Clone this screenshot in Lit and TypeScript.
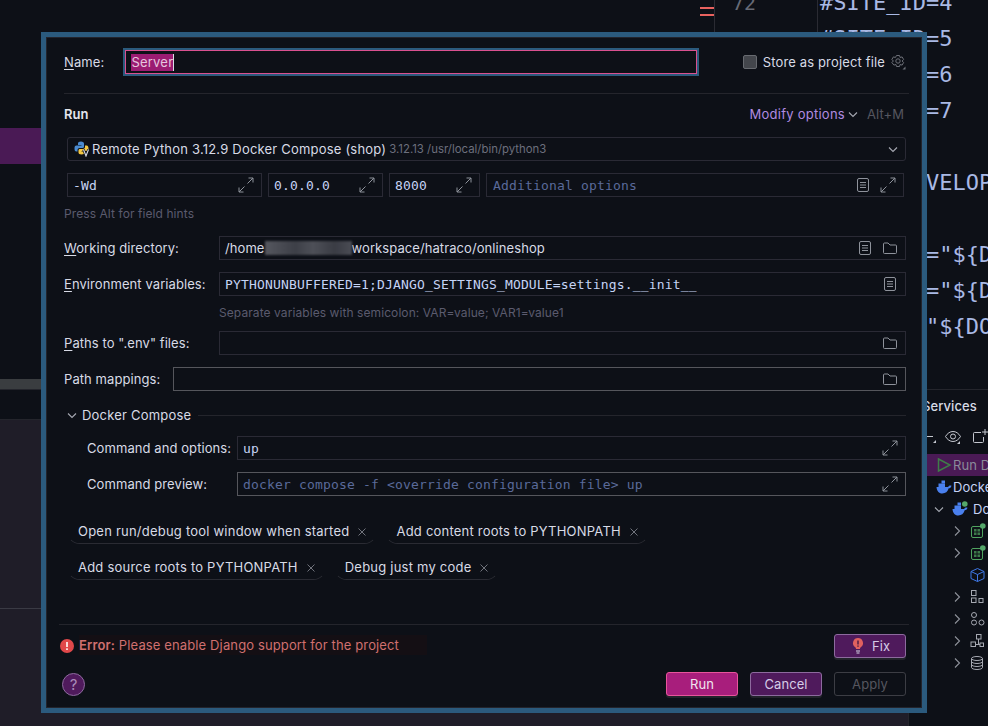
import {css, html, LitElement, svg} from 'lit';
import {customElement} from 'lit/decorators.js';

const expand = html`<svg class="ic" viewBox="0 0 16 16" fill="none" stroke="#8e929b" stroke-width="1"><path d="M9.5 6.5 15 1M10.5 1H15V5.5M6.5 9.5 1 15M1 10.5V15H5.5"/></svg>`;
const docIcon = html`<svg class="ic" viewBox="0 0 16 16" fill="none" stroke="#8e929b" stroke-width="1"><rect x="2.5" y="1.5" width="11" height="13" rx="1.5"/><path d="M5 5.500h6M5 8h6M5 10.500h6"/></svg>`;
const folder = html`<svg class="ic" viewBox="0 0 16 16" fill="none" stroke="#8e929b" stroke-width="1"><path d="M1.500 4a1 1 0 0 1 1-1H6l2 2h5.500a1 1 0 0 1 1 1v6.500a1 1 0 0 1-1 1h-11a1 1 0 0 1-1-1z"/></svg>`;
const chevDown = html`<svg class="ic" viewBox="0 0 16 16" fill="none" stroke="#a6a9b2" stroke-width="1.100"><path d="M4 6.500 8 10.500 12 6.500"/></svg>`;
const chevRight = html`<svg class="ic" viewBox="0 0 16 16" fill="none" stroke="#8e929b" stroke-width="1.100"><path d="M6 3.500 10.500 8 6 12.500"/></svg>`;
const cross = html`<svg class="x" viewBox="0 0 10 10" fill="none" stroke="#70737c" stroke-width="1"><path d="M1.500 1.500 8.500 8.500M8.500 1.500 1.500 8.500"/></svg>`;

const whale = (dot = false) => html`<svg class="ic" viewBox="0 0 16 16">
    <path fill="#4a80ee" d="M.5 8h11.700c.5-1.200 1.800-1.700 3.300-1.300-.4 1.700-1.500 2.500-2.800 2.600C11.700 12.700 9.500 14.500 6.300 14.500 2.800 14.500.8 12 .5 8z"/>
    <rect x="2.500" y="4.500" width="6.500" height="3.500" fill="#4a80ee"/>
    <rect x="5.500" y="1.500" width="3.500" height="3" fill="#4a80ee"/>
    ${dot ? svg`<circle cx="12.800" cy="3" r="2.800" fill="#55a76a"/>` : ''}
</svg>`;
const grid = html`<svg class="ic" viewBox="0 0 16 16" fill="none">
    <rect x="1.500" y="3.500" width="11" height="11" rx="1.500" stroke="#4fa35f"/>
    <path d="M4 6h6v6H4z" fill="#3c7a49"/><path d="M7 6v6M4 9h6" stroke="#12161c"/>
    <circle cx="12.800" cy="3" r="2.800" fill="#55a76a"/>
</svg>`;
const cube = html`<svg class="ic" viewBox="0 0 16 16" fill="none" stroke="#3f78e6"><path d="M7.500 1.500 14 4.500V11.500L7.500 14.500 1 11.500V4.500zM1 4.500 7.500 7.500 14 4.500M7.500 7.500V14.500"/></svg>`;
const stack = html`<svg class="ic" viewBox="0 0 16 16" fill="none" stroke="#a6a9b2"><rect x="1.500" y="1.500" width="4.500" height="5"/><rect x="1.500" y="9" width="4.500" height="4.500"/><rect x="9" y="9.500" width="4" height="4"/></svg>`;
const nodes = html`<svg class="ic" viewBox="0 0 16 16" fill="none" stroke="#a6a9b2"><circle cx="4" cy="4" r="2.500"/><circle cx="4" cy="11.500" r="2.500"/><circle cx="11.500" cy="11.500" r="2.500"/></svg>`;
const network = html`<svg class="ic" viewBox="0 0 16 16" fill="none" stroke="#a6a9b2"><rect x="6.500" y="1.500" width="4.500" height="4.500"/><rect x="1" y="9" width="4.500" height="4.500"/><rect x="10" y="10" width="3.500" height="3.500"/><path d="M8.500 6v5.500M5.500 11.500H10"/></svg>`;
const db = html`<svg class="ic" viewBox="0 0 16 16" fill="none" stroke="#a6a9b2"><ellipse cx="7" cy="3.500" rx="5.500" ry="2"/><path d="M1.500 3.500v9c0 1.100 2.500 2 5.500 2s5.500-.9 5.500-2v-9M1.500 6.500c0 1.100 2.500 2 5.500 2s5.500-.9 5.500-2M1.500 9.500c0 1.100 2.500 2 5.500 2s5.500-.9 5.500-2"/></svg>`;

const codeLines = ['#SITE_ID=4', '#SITE_ID=5', '#SITE_ID=6', '#SITE_ID=7', '', '#     DEVELOP', '', 'DATABASE="${DB_NAME}"', 'USERNAME="${DB_USER}"', 'DB_PASS="${DOCKER}"'];

const services = [
    {indent: 27, chevron: null, icon: html`<svg class="ic" viewBox="0 0 16 16" fill="none" stroke="#3f7d48" stroke-width="1.500"><path d="M2.500 2 14 8 2.500 14z"/></svg>`, text: 'Run D', run: true},
    {indent: 27, chevron: null, icon: whale(), text: 'Docke'},
    {indent: 22, chevron: chevDown, icon: whale(true), text: 'Do', nested: true},
    {indent: 40, chevron: chevRight, icon: grid},
    {indent: 40, chevron: chevRight, icon: grid},
    {indent: 61, chevron: null, icon: cube},
    {indent: 40, chevron: chevRight, icon: stack},
    {indent: 40, chevron: chevRight, icon: nodes},
    {indent: 40, chevron: chevRight, icon: network},
    {indent: 40, chevron: chevRight, icon: db},
];

@customElement("app-root")
export class AppRoot extends LitElement {

    static styles = css`
        :host {
            display: block;
            position: relative;
            width: 988px;
            height: 726px;
            overflow: hidden;
            background: #0d1017;
            font-family: Inter, "Liberation Sans", sans-serif;
            font-size: 13px;
            letter-spacing: .08px;
            color: #d8dbe6;
        }

        .ic {
            width: 16px;
            height: 16px;
            flex: none;
            display: block;
        }

        /* ide behind the dialog */
        .ide {
            display: grid;
            grid-template-columns: 909px 79px;
            grid-template-rows: 390px 336px;
            height: 726px;
        }

        .editor {
            grid-column: 1 / 3;
            display: flex;
            overflow: hidden;
            border-bottom: 1px solid #24252c;
            box-sizing: border-box;
        }

        .projectPane {
            width: 700px;
            flex: none;
            display: flex;
            flex-direction: column;
        }

        .selected {
            height: 36px;
            margin-top: 128px;
            background: #4a1a55;
        }

        .hscroll {
            height: 10px;
            margin-top: auto;
            background: #3a3d40;
        }

        .marker {
            width: 14px;
            height: 9px;
            flex: none;
            margin-top: 7px;
            box-sizing: border-box;
            border-top: 2px solid #e8625f;
            border-bottom: 2px solid #e8625f;
        }

        .gutter {
            width: 104px;
            flex: none;
            border-left: 1px solid #2a2b33;
            border-right: 1px solid #2a2b33;
            padding-left: 17px;
            box-sizing: border-box;
            font: 20px/36px "DejaVu Sans Mono", monospace;
            color: #666a76;
        }

        .gutter div, .code div {
            height: 36px;
            position: relative;
            top: -15px;
        }

        .code {
            flex: none;
            padding-left: 2px;
            font: 22px/36px "DejaVu Sans Mono", monospace;
            letter-spacing: 0;
            color: #a9b9e5;
            white-space: pre;
        }

        .bottomLeft {
            display: flex;
            flex-direction: column;
        }

        .bottomLeft .gap {
            height: 29px;
        }

        .bottomLeft .panel {
            flex: 1;
            background: #1f1d28;
            border-top: 1px solid #24252c;
        }

        .bottomLeft .panel div {
            height: 188px;
            border-bottom: 1px solid #3a3a44;
        }

        .servicesPane {
            border-left: 1px solid #24252c;
            margin-left: -1px;
            padding-top: 6px;
            overflow: hidden;
        }

        .servicesTitle {
            height: 20px;
            line-height: 20px;
            padding-left: 13px;
            font-size: 13px;
            font-weight: 500;
        }

        .toolbar {
            display: flex;
            align-items: center;
            height: 24px;
            margin: 9px 0 5px;
            padding-left: 18px;
        }

        .toolbar .dash {
            width: 10px;
            height: 16px;
            flex: none;
            margin-right: 8px;
        }

        .toolbar .tab {
            margin-left: 11px;
        }

        .tree {
            display: flex;
            flex-direction: column;
        }

        .treeRow {
            height: 22px;
            display: flex;
            align-items: center;
            white-space: nowrap;
            color: #c5d3f5;
            gap: 3px;
        }

        .treeRow.run {
            background: #4a1a55;
            color: #8b8b9a;
        }

        .treeRow .ic + .ic {
            margin-left: 2px;
        }

        .treeText {
            margin-left: -2px;
        }

        .treeText.nested {
            margin-left: 2px;
        }

        /* dialog */
        .dialog {
            position: absolute;
            left: 41px;
            top: 32px;
            width: 886px;
            height: 681px;
            box-sizing: border-box;
            border: 5px solid #2b5a7d;
            background: #0d1017;
        }

        .body {
            height: 100%;
            box-sizing: border-box;
            border: 1px solid #23242c;
            padding: 10px 15px 11px 17px;
            display: flex;
            flex-direction: column;
        }

        .row {
            display: flex;
            align-items: center;
            height: 24px;
            margin-top: 12px;
            flex: none;
        }

        .nameRow {
            height: 28px;
            margin-top: 0;
        }

        .nameLabel {
            width: 61px;
        }

        .nameInput {
            width: 569px;
            height: 22px;
            margin-left: 1px;
            border: 1px solid #d9508f;
            box-shadow: 0 0 0 2px #2b5a7d;
            padding-left: 5px;
            display: flex;
            align-items: center;
            color: #e6c6df;
            letter-spacing: .2px;
        }

        .nameInput .sel {
            background: #9b1c72;
            height: 17px;
            line-height: 17px;
            border-right: 1px solid #d8dbe6;
        }

        .store {
            margin-left: 46px;
            display: flex;
            align-items: center;
            gap: 6px;
            white-space: nowrap;
            letter-spacing: .15px;
        }

        .checkbox {
            width: 12px;
            height: 12px;
            border: 1px solid #676a70;
            background: #43464c;
            border-radius: 2px;
        }

        .gear {
            margin-left: -1px;
        }

        .divider {
            height: 1px;
            background: #24252c;
            flex: none;
        }

        .topDivider {
            margin: 17px -3px 0 0;
        }

        .runRow {
            height: 18px;
            margin-top: 11px;
        }

        .runTitle {
            font-weight: 600;
            color: #e4e6ee;
        }

        .modify {
            margin-left: auto;
            color: #b08be0;
            letter-spacing: .25px;
        }

        .shortcut {
            margin: 0 2px 0 6px;
            color: #55565f;
        }

        .combo {
            margin: 14px 0 0 3px;
            border: 1px solid #2a2a35;
            border-radius: 3px;
            padding: 0 4px 0 6px;
            box-sizing: border-box;
            gap: 2px;
            letter-spacing: .2px;
        }

        .combo .version {
            font-size: 11.400px;
            color: #6c6f7d;
            margin-left: 1px;
            letter-spacing: 0;
        }

        .combo .ic:last-child {
            margin-left: auto;
        }

        .fieldsRow {
            gap: 6px;
            margin: 12px 2px 0 3px;
        }

        .field {
            flex: 1;
            height: 24px;
            box-sizing: border-box;
            border: 1px solid #2a2a35;
            display: flex;
            align-items: center;
            gap: 9px;
            padding: 0 7px 0 5px;
            min-width: 0;
            white-space: nowrap;
        }

        .field.bright {
            border-color: #55565c;
        }

        .fieldText {
            margin-right: auto;
            display: flex;
            align-items: center;
        }

        .mono {
            font-family: "DejaVu Sans Mono", monospace;
            font-size: 13px;
            letter-spacing: .17px;
            color: #c5d3f5;
        }

        .placeholder {
            color: #5a6a9a;
        }

        .extra {
            padding-left: 6px;
        }

        .hint {
            height: 18px;
            line-height: 18px;
            margin-top: 8px;
            font-size: 12px;
            color: #5b5b6e;
            flex: none;
        }

        .hintIndented {
            padding-left: 155px;
        }

        .wide {
            width: 155px;
            flex: none;
        }

        .short {
            width: 109px;
            flex: none;
        }

        .cmd {
            width: 150px;
            margin-left: 23px;
            flex: none;
        }

        u {
            text-underline-offset: 2px;
        }

        .redacted {
            display: inline-block;
            width: 87px;
            height: 14px;
            background: linear-gradient(90deg, #55575f, #3d3f47 35%, #4e5058 55%, #3a3c44 80%, #4a4c55);
            filter: blur(1px);
        }

        .section {
            height: 19px;
            margin: 14px 0 0 0;
            gap: 2px;
            white-space: nowrap;
            letter-spacing: .2px;
        }

        .section .divider {
            flex: 1;
            margin: 2px 0 0 5px;
        }

        .chips {
            display: flex;
            flex-wrap: wrap;
            gap: 11px 8px;
            margin: 23px 0 0 3px;
            max-width: 600px;
            letter-spacing: .22px;
        }

        .chip {
            height: 25px;
            box-sizing: border-box;
            border: 1px solid transparent;
            border-bottom-color: #2a2b33;
            border-radius: 13px;
            padding: 0 9px 0 10px;
            display: flex;
            align-items: center;
            gap: 8px;
            white-space: nowrap;
        }

        .chip span {
            position: relative;
            top: -1px;
        }

        .x {
            width: 10px;
            height: 10px;
            flex: none;
        }

        .footer {
            margin-top: auto;
            display: flex;
            flex-direction: column;
        }

        .footerDivider {
            margin: 0 -3px 0 -5px;
        }

        .errorRow {
            margin: 9px 0 0 -4px;
        }

        .error {
            margin: -2px 0 0 5px;
            padding: 2px 28px 2px 0;
            background: #140f14;
            color: #d0706f;
            letter-spacing: .13px;
        }

        .error b {
            font-weight: 600;
        }

        .button {
            width: 72px;
            height: 24px;
            box-sizing: border-box;
            border: 1px solid #8d6a9e;
            border-radius: 3px;
            background: #4f1a5c;
            box-shadow: 0 2px 0 #22232b;
            color: #d5cbe6;
            display: flex;
            align-items: center;
            justify-content: center;
            gap: 6px;
        }

        .fix {
            margin-left: auto;
        }

        .primary {
            background: #a81e7c;
            border-color: #e8559c;
            color: #f0e6ee;
        }

        .disabled {
            background: transparent;
            border-color: #3c3d44;
            box-shadow: none;
            color: #55565f;
        }

        .buttonRow {
            margin: 14px 0 0 -2px;
            gap: 12px;
        }

        .help {
            width: 23px;
            height: 23px;
            box-sizing: border-box;
            border: 1px solid #8d6a9e;
            border-radius: 50%;
            background: #4f1a5c;
            color: #a98bb8;
            font-size: 15px;
            display: flex;
            align-items: center;
            justify-content: center;
            margin-right: auto;
        }
    `;

    private renderBackground() {
        return html`
            <div class="ide">
                <div class="editor">
                    <div class="projectPane">
                        <div class="selected"></div>
                        <div class="hscroll"></div>
                    </div>
                    <div class="marker"></div>
                    <div class="gutter"><div>72</div><div>73</div></div>
                    <div class="code">${codeLines.map(line => html`<div>${line}</div>`)}</div>
                </div>
                <div class="bottomLeft">
                    <div class="gap"></div>
                    <div class="panel"><div></div></div>
                </div>
                <div class="servicesPane">
                    <div class="servicesTitle">Services</div>
                    <div class="toolbar">
                        <svg class="dash" viewBox="0 0 10 16" fill="none"><path d="M0 7.500h6" stroke="#c4c7cf"/><path d="M9 11v3H6z" fill="#c4c7cf"/></svg>
                        <svg class="ic" viewBox="0 0 16 16" fill="none" stroke="#c4c7cf"><path d="M.5 7.500c2-3.300 4.500-5 7.500-5s5.500 1.700 7.500 5c-2 3.300-4.500 5-7.500 5s-5.500-1.700-7.500-5z"/><circle cx="8" cy="7.500" r="2.500"/><path d="M15 12v3h-3z" fill="#c4c7cf" stroke="none"/></svg>
                        <svg class="ic tab" viewBox="0 0 16 16" fill="none" stroke="#c4c7cf"><path d="M9 3.500H2.500a1 1 0 0 0-1 1v8a1 1 0 0 0 1 1h8a1 1 0 0 0 1-1V8M13 0v6M10 3h6"/></svg>
                    </div>
                    <div class="tree">
                        ${services.map(item => html`
                            <div class="treeRow ${item.run ? 'run' : ''}" style="padding-left:${item.indent}px">
                                ${item.chevron ?? ''}
                                ${item.icon}
                                ${item.text ? html`<span class="treeText ${item.nested ? 'nested' : ''}">${item.text}</span>` : ''}
                            </div>`)}
                    </div>
                </div>
            </div>`;
    }

    private renderField(content: unknown, icons: unknown[], labelClass: string, label: unknown, bright = false) {
        return html`
            <div class="row">
                <div class=${labelClass}>${label}</div>
                <div class="field ${bright ? 'bright' : ''}">
                    <div class="fieldText">${content}</div>
                    ${icons}
                </div>
            </div>`;
    }

    private renderChip(text: string) {
        return html`<div class="chip"><span>${text}</span>${cross}</div>`;
    }

    render() {
        return html`
            ${this.renderBackground()}
            <div class="dialog">
                <div class="body">
                    <div class="row nameRow">
                        <div class="nameLabel"><u>N</u>ame:</div>
                        <div class="nameInput"><span class="sel">Server</span></div>
                        <div class="store">
                            <div class="checkbox"></div>
                            Store as project file
                            <svg class="ic gear" viewBox="0 0 16 16" fill="none" stroke="#6d7078"><path d="M6.500 1.500h3l.6 2 2-.6 1.500 2.600L12.100 7l1.500 1.500-1.500 2.600-2-.6-.6 2h-3l-.6-2-2 .6L1.900 8.500 3.400 7 1.900 5.500 3.400 2.900l2 .6z"/><circle cx="8" cy="7" r="2.200"/><path d="M15.500 12.500v3h-3z" fill="#6d7078" stroke="none"/></svg>
                        </div>
                    </div>
                    <div class="divider topDivider"></div>

                    <div class="row runRow">
                        <div class="runTitle">Run</div>
                        <div class="modify">Modify options</div>
                        ${chevDown}
                        <div class="shortcut">Alt+M</div>
                    </div>

                    <div class="row combo">
                        <svg class="ic" viewBox="0 0 16 16">
                            <path fill="#4b8bd0" d="M7 .5C4.500.5 4 1.500 4 2.500V4h3.500v.5h-5C1 4.500.5 5.700.5 7.500s.5 3 2 3h1V9c0-1.200 1-2 2-2h3c1 0 1.500-.7 1.500-1.500v-3c0-1-1-2-3-2z"/>
                            <path fill="#f2c744" d="M12.500 4.500H11V6c0 1.200-1 2-2 2H6c-1 0-1.500.7-1.500 1.500v2c0 1 1 2 3 2s3-1 3-2v-1H7.500V10h5c1 0 2-1 2-2.500s-.5-3-2-3z"/>
                            <path d="M9.500 8.500 12 15l2.500-6.500" fill="none" stroke="#0d1017" stroke-width="2.500"/>
                            <path d="M9.500 8.500 12 15l2.500-6.500" fill="none" stroke="#d8dbe6" stroke-width="1.100"/>
                        </svg>
                        <span>Remote Python 3.12.9 Docker Compose (shop)</span>
                        <span class="version">3.12.13 /usr/local/bin/python3</span>
                        ${chevDown}
                    </div>

                    <div class="row fieldsRow">
                        <div class="field" style="flex:0 0 195px"><div class="fieldText mono">-Wd</div>${expand}</div>
                        <div class="field" style="flex:0 0 115px"><div class="fieldText mono">0.0.0.0</div>${expand}</div>
                        <div class="field" style="flex:0 0 91px"><div class="fieldText mono">8000</div>${expand}</div>
                        <div class="field extra"><div class="fieldText mono placeholder">Additional options</div>${docIcon}${expand}</div>
                    </div>
                    <div class="hint">Press Alt for field hints</div>

                    <div style="height:1px;flex:none"></div>
                    ${this.renderField(html`/home<span class="redacted"></span>workspace/hatraco/onlineshop`, [docIcon, folder], 'wide', html`<u>W</u>orking directory:`)}
                    ${this.renderField(html`<span class="mono">PYTHONUNBUFFERED=1;DJANGO_SETTINGS_MODULE=settings.__init__</span>`, [docIcon], 'wide', html`<u>E</u>nvironment variables:`)}
                    <div class="hint hintIndented">Separate variables with semicolon: VAR=value; VAR1=value1</div>
                    <div style="height:1px;margin-bottom:-4px;flex:none"></div>
                    ${this.renderField('', [folder], 'wide', html`<u>P</u>aths to ".env" files:`)}
                    ${this.renderField('', [folder], 'short', 'Path mappings:', true)}

                    <div class="row section">
                        ${chevDown}
                        <span>Docker Compose</span>
                        <div class="divider"></div>
                    </div>

                    ${this.renderField(html`<span class="mono">up</span>`, [expand], 'cmd', 'Command and options:')}
                    ${this.renderField(html`<span class="mono placeholder">docker compose -f &lt;override configuration file&gt; up</span>`, [expand], 'cmd', 'Command preview:', true)}

                    <div class="chips">
                        ${this.renderChip('Open run/debug tool window when started')}
                        ${this.renderChip('Add content roots to PYTHONPATH')}
                        ${this.renderChip('Add source roots to PYTHONPATH')}
                        ${this.renderChip('Debug just my code')}
                    </div>

                    <div class="footer">
                        <div class="divider footerDivider"></div>
                        <div class="row errorRow">
                            <svg class="ic" style="width:14px;height:14px" viewBox="0 0 14 14">
                                <circle cx="7" cy="7" r="7" fill="#e0484a"/>
                                <rect x="6.200" y="3" width="1.600" height="5" fill="#fff"/>
                                <rect x="6.200" y="9.300" width="1.600" height="1.700" fill="#fff"/>
                            </svg>
                            <div class="error"><b>Error:</b> Please enable Django support for the project</div>
                            <div class="button fix">
                                <svg class="ic" viewBox="0 0 16 16"><path fill="#e0605f" d="M8 0a5 5 0 0 0-3 9c.6.500 1 1 1 2h4c0-1 .4-1.500 1-2A5 5 0 0 0 8 0z"/><path d="M8 2.500v4M8 7.500v1.200" stroke="#3a1240" stroke-width="1.300"/><path d="M6 13h4M6.500 15h3" stroke="#d8dbe6"/></svg>
                                Fix
                            </div>
                        </div>
                        <div class="row buttonRow">
                            <div class="help">?</div>
                            <div class="button primary">Run</div>
                            <div class="button">Cancel</div>
                            <div class="button disabled">Apply</div>
                        </div>
                    </div>
                </div>
            </div>
        `;
    }
}
